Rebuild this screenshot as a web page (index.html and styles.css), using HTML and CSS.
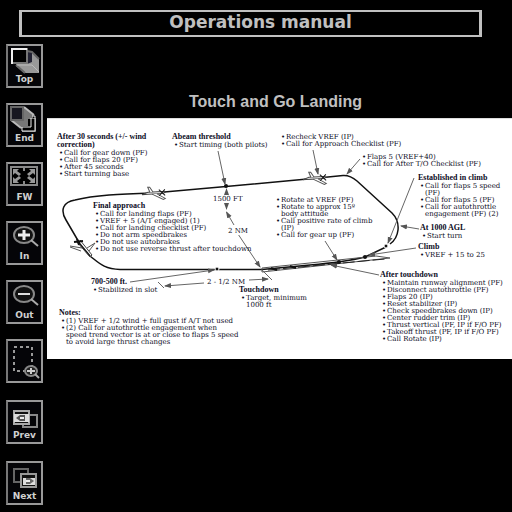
FILE: index.html
```
<!DOCTYPE html>
<html lang="en">
<head>
<meta charset="utf-8">
<title>Operations manual</title>
<link rel="stylesheet" href="styles.css">
</head>
<body>
<header class="banner"><h1>Operations manual</h1></header>
<div class="layout">
  <nav class="sidebar" aria-label="Manual controls">
    <div class="group">
      <button class="tool" type="button">
        <svg viewBox="0 0 33 28" aria-hidden="true"><path d="M19 5l5 1 7 7v14H16l-8-7v-3h11z" fill="#999"/><path d="M19 5l5 1v10l-5 2z" fill="#223"/><path d="M19 5l5 1 7 7M8 19l9 8" stroke="#666" fill="none" stroke-width="2"/><path d="M9 19h15l7 7" stroke="#bbb" fill="none"/><path d="M4 3h15v14H4z" fill="#000" stroke="#777" stroke-width="2"/><path d="M4 18V3h15" fill="none" stroke="#eee" stroke-width="2"/></svg>
        <span>Top</span>
      </button>
      <button class="tool" type="button">
        <svg viewBox="0 0 33 28" aria-hidden="true"><path d="M3 2h13l9 7v4h3v14H14v-3L3 15z" fill="#777"/><path d="M16 2l10 8M3 15l10 8" stroke="#bbb" stroke-width="2"/><path d="M3 2h12v13H3z" fill="#171720" stroke="#666" stroke-width="2"/><path d="M20 14h7v12H14v-5h6z" fill="#000"/><path d="M24 11h3v15H14v-4h9v-9" fill="none" stroke="#eee" stroke-width="1"/></svg>
        <span>End</span>
      </button>
      <button class="tool" type="button">
        <svg viewBox="0 0 33 28" aria-hidden="true"><path d="M3 3h26v18H3z" fill="#000" stroke="#888" stroke-width="2"/><path d="M5 5h6l-2 2 4 3-2 2-4-3-2 2zM27 5h-6l2 2-4 3 2 2 4-3 2 2zM5 19h6l-2-2 4-3-2-2-4 3-2-2zM27 19h-6l2-2-4-3 2-2 4 3 2-2z" fill="#999"/><path d="M15 4h2v3h-2zM15 17h2v3h-2z" fill="#888"/></svg>
        <span>FW</span>
      </button>
      <button class="tool" type="button">
        <svg viewBox="0 0 33 28" aria-hidden="true"><ellipse cx="16" cy="12" rx="10" ry="8" fill="#111" stroke="#888" stroke-width="2"/><path d="M23 17l7 6" stroke="#aaa" stroke-width="2"/><path d="M10 12h12M16 7v10" stroke="#eee" stroke-width="3"/></svg>
        <span>In</span>
      </button>
      <button class="tool" type="button">
        <svg viewBox="0 0 33 28" aria-hidden="true"><ellipse cx="16" cy="12" rx="10" ry="8" fill="#111" stroke="#888" stroke-width="2"/><path d="M23 17l7 6" stroke="#aaa" stroke-width="2"/><path d="M10 12h12" stroke="#ddd" stroke-width="2"/></svg>
        <span>Out</span>
      </button>
      <button class="tool" type="button" aria-label="Zoom to area">
        <svg class="full" viewBox="0 0 33 40" aria-hidden="true"><path d="M6 6h18v24H6z" fill="none" stroke="#999" stroke-width="2" stroke-dasharray="3 3"/><ellipse cx="23" cy="30" rx="6" ry="5" fill="#222" stroke="#888" stroke-width="2"/><path d="M19 30h8M23 27v6" stroke="#ccc" stroke-width="2"/><path d="M27 33l4 4" stroke="#aaa" stroke-width="2"/></svg>
      </button>
    </div>
    <div class="group history">
      <button class="tool" type="button">
        <svg viewBox="0 0 33 28" aria-hidden="true"><path d="M15 13h14v12H15z" fill="none" stroke="#888" stroke-width="2"/><path d="M6 9h15v13H6z" fill="#111" stroke="#aaa" stroke-width="2"/><path d="M6 12h15v8H6z" fill="#ddd"/><path d="M8 16l4-3h5v6h-5z" fill="#555"/><path d="M12 16h4" stroke="#eee" stroke-width="2"/></svg>
        <span>Prev</span>
      </button>
      <button class="tool" type="button">
        <svg viewBox="0 0 33 28" aria-hidden="true"><path d="M6 6h14v13H6z" fill="none" stroke="#666" stroke-width="2"/><path d="M13 11h15v13H13z" fill="#111" stroke="#999" stroke-width="2"/><path d="M15 15h12v7H15z" fill="#ddd"/><path d="M26 18l-4-3h-4v6h4z" fill="#666"/><path d="M18 18h4" stroke="#eee" stroke-width="2"/></svg>
        <span>Next</span>
      </button>
    </div>
  </nav>
  <main class="page">
    <h2>Touch and Go Landing</h2>
    <div class="sheet">
      <div class="chart">
        <svg class="track" viewBox="47 118 465 240" aria-hidden="true">
          <defs>
            <marker id="tip" viewBox="0 0 7 6" markerWidth="7" markerHeight="6" refX="6" refY="3" orient="auto-start-reverse" markerUnits="userSpaceOnUse"><path d="M0 0.5L7 3 0 5.5z" fill="#555"/></marker>
            <g id="plane"><path d="M-12 1L-6-1H9l2 1-2 1H-6z" fill="#fff" stroke="#444"/><path d="M-4-1l-2-5h2l3 5M-2 1l11 6 2-1-8-5" fill="#fff" stroke="#555"/><path d="M5-3l6 6M5 3l6-6" fill="none" stroke="#111"/></g>
          </defs>
          <path class="route" d="M262 268.500H120C104 268 99 262 90 255L80 243 66 219C60 209 63 201 75 199 95 194 120 193 153 192L226 185.500 318 177 343 174.500Q350 174 357 180L392 212Q399 219 398 229 397 238 390 243"/>
          <path class="route" d="M386 246L365 256Q345 261 310 264L262 268.500"/>
          <path d="M262 267L376 255 390 257 262 271z" fill="none" stroke="#555"/>
          <path d="M268 269L385 258" stroke="#222" stroke-dasharray="12 3"/>
          <path d="M271 267l6 2M290 265l6 2" stroke="#111" stroke-width="2"/>
          <circle cx="226" cy="185" r="2" fill="#111"/><circle cx="217" cy="268" r="2" fill="#111" stroke="#fff"/>
          <circle cx="386" cy="245" r="2" fill="#111" stroke="#fff"/><circle cx="365" cy="256" r="2" fill="#111"/><circle cx="339" cy="261" r="2" fill="#111"/>
          <use href="#plane" transform="translate(154 192) rotate(-3)"/>
          <use href="#plane" transform="translate(315 177) rotate(-3)"/>
          <path d="M90 256L77 241M92 254L80 239M90 256l2-2" fill="none" stroke="#444"/>
          <path d="M82 247L70 245M70 246l11 4M87 247l8-5-6 8" fill="none" stroke="#555"/>
          <path d="M74 241l9-1M77 238l2 6" fill="none" stroke="#111" stroke-width="2"/>
          <g class="leader">
            <path marker-end="url(#tip)" d="M218 150L225 183"/>
            <path marker-start="url(#tip)" marker-end="url(#tip)" d="M226.500 188V208"/>
            <path marker-start="url(#tip)" d="M226.500 211L234 224"/>
            <path marker-end="url(#tip)" d="M238 233L260 266"/>
            <path marker-end="url(#tip)" d="M313 149L318 173"/>
            <path marker-end="url(#tip)" d="M360 158L347 173"/>
            <path marker-end="url(#tip)" d="M414 177L388 242"/>
            <path marker-end="url(#tip)" d="M419 228L401 225"/>
            <path marker-end="url(#tip)" d="M416 247L369 254"/>
            <path marker-end="url(#tip)" d="M325 240L337 259"/>
            <path marker-end="url(#tip)" d="M379 274L331 264"/>
            <path marker-end="url(#tip)" d="M130 281L214 269"/>
            <path d="M158 281l6 6M262 269l10 10"/>
            <path marker-end="url(#tip)" d="M204 282L165 285"/>
            <path marker-end="url(#tip)" d="M249 279L268 278"/>
          </g>
        </svg>
        <section class="note after30"><h3>After 30 seconds (+/- wind<br>correction)</h3><ul><li>Call for gear down (PF)</li><li>Call for flaps 20 (PF)</li><li>After 45 seconds</li><li>Start turning base</li></ul></section>
        <section class="note abeam"><h3>Abeam threshold</h3><ul><li>Start timing (both pilots)</li></ul></section>
        <section class="note recheck"><ul><li>Recheck VREF (IP)</li><li>Call for Approach Checklist (PF)</li></ul></section>
        <section class="note flaps"><ul><li>Flaps 5 (VREF+40)</li><li>Call for After T/O Checklist (PF)</li></ul></section>
        <section class="note established"><h3>Established in climb</h3><ul><li>Call for flaps 5 speed<br>(PF)</li><li>Call for flaps 5 (PF)</li><li>Call for autothrottle<br>engagement (PF) (2)</li></ul></section>
        <section class="note final"><h3>Final approach</h3><ul><li>Call for landing flaps (PF)</li><li>VREF + 5 (A/T engaged) (1)</li><li>Call for landing checklist (PF)</li><li>Do not arm speedbrakes</li><li>Do not use autobrakes</li><li>Do not use reverse thrust after touchdown</li></ul></section>
        <section class="note rotate"><ul><li>Rotate at VREF (PF)</li><li>Rotate to approx 15º<br>body attitude</li><li>Call positive rate of climb<br>(IP)</li><li>Call for gear up (PF)</li></ul></section>
        <section class="note agl"><h3>At 1000 AGL</h3><ul><li>Start turn</li></ul></section>
        <section class="note climb"><h3>Climb</h3><ul><li>VREF + 15 to 25</li></ul></section>
        <section class="note after-td"><h3>After touchdown</h3><ul><li>Maintain runway alignment (PF)</li><li>Disconnect autothrottle (PF)</li><li>Flaps 20 (IP)</li><li>Reset stabilizer (IP)</li><li>Check speedbrakes down (IP)</li><li>Center rudder trim (IP)</li><li>Thrust vertical (PF, IP if F/O PF)</li><li>Takeoff thrust (PF, IP if F/O PF)</li><li>Call Rotate (IP)</li></ul></section>
        <section class="note touchdown"><h3>Touchdown</h3><ul><li>Target, minimum<br>1000 ft</li></ul></section>
        <section class="note slot"><h3>700-500 ft.</h3><ul><li>Stabilized in slot</li></ul></section>
        <section class="note notes"><h3>Notes:</h3><ul><li>(1) VREF + 1/2 wind + full gust if A/T not used</li><li>(2) Call for autothrottle engagement when<br>speed trend vector is at or close to flaps 5 speed<br>to avoid large thrust changes</li></ul></section>
        <span class="measure height">1500 FT</span>
        <span class="measure abeam-gap">2 NM</span>
        <span class="measure final-leg">2 - 1/2 NM</span>
      </div>
    </div>
  </main>
</div>
</body>
</html>
```
FILE: styles.css
```
* { box-sizing: border-box; }
body {
  margin: 0;
  background: #000;
  color: #c0c0c0;
  font-family: "DejaVu Sans", sans-serif;
}
h1, h2, h3, ul { margin: 0; padding: 0; }

.banner {
  margin: 10px 30px 0 19px;
  padding: 0 0 3px 20px;
  border: solid #c0c0c0;
  border-width: 2px 3px;
  text-align: center;
}
.banner h1 { font-size: 17px; line-height: 20px; }

.layout { display: grid; grid-template-columns: 47px 1fr; }

.sidebar { padding: 7px 0 0 6px; }
.group { display: flex; flex-direction: column; gap: 15px; }
.history { gap: 17px; margin-top: 17px; }
.tool {
  display: flex;
  flex-direction: column;
  align-items: center;
  width: 37px;
  height: 44px;
  padding: 0;
  border: 2px solid #999;
  border-left-color: #777;
  background: #050508;
  color: #d0d0d0;
  font: bold 9px/11px "DejaVu Sans", sans-serif;
}
.tool svg { display: block; width: 33px; height: 28px; flex: none; }
.tool .full { height: 40px; }

.page { padding-top: 56px; min-width: 0; }
.page h2 {
  padding: 0 8px 0 0;
  font: bold 16px/18px "Liberation Sans", sans-serif;
  text-align: center;
}
.sheet {
  margin-top: 7px;
  border-top: 1px solid #ddd;
  background: #fff;
  overflow: hidden;
}
.chart {
  position: relative;
  width: 465px;
  color: #0c0c24;
  font: 7px/7px "DejaVu Serif", serif;
  white-space: nowrap;
}
.track { display: block; width: 100%; }
.route { fill: none; stroke: #111; stroke-width: 1.5; }
.leader { fill: none; stroke: #666; }

.note, .measure { position: absolute; }
.note h3 { font: bold 8px/8px "Liberation Serif", serif; }
.note ul { list-style: none; margin-left: 2px; }
.note h3 + ul { margin-top: 1px; }
.note li { position: relative; padding-left: 5px; }
.note li::before { content: "•"; position: absolute; left: 0; }

.after30 { left: 10px; top: 14px; }
.abeam { left: 125px; top: 14px; }
.recheck { left: 232px; top: 15px; }
.flaps { left: 313px; top: 35px; }
.established { left: 371px; top: 55px; }
.final { left: 46px; top: 83px; }
.rotate { left: 227px; top: 78px; }
.agl { left: 373px; top: 105px; }
.climb { left: 371px; top: 124px; }
.after-td { left: 333px; top: 152px; }
.touchdown { left: 192px; top: 167px; }
.slot { left: 44px; top: 159px; }
.notes { left: 12px; top: 190px; }

.measure { background: #fff; line-height: 8px; }
.height { left: 166px; top: 76px; }
.abeam-gap { left: 181px; top: 108px; }
.final-leg { left: 160px; top: 159px; }
```
